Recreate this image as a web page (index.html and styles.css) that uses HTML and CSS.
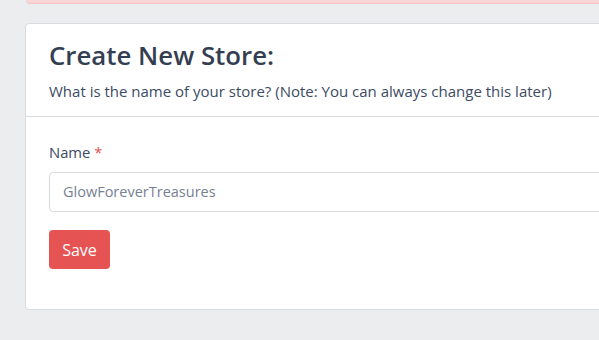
FILE: index.html
```html
<!DOCTYPE html>
<html>
<head>
<meta charset="utf-8">
<link rel="stylesheet" href="styles.css">
</head>
<body>
<div class="page">
  <div class="alert"></div>
  <div class="card">
    <div class="card-header">
      <h1 class="title">Create New Store:</h1>
      <p class="subtitle">What is the name of your store? (Note: You can always change this later)</p>
    </div>
    <div class="card-body">
      <label class="label">Name <span class="req">*</span></label>
      <div class="input">GlowForeverTreasures</div>
      <button class="btn">Save</button>
    </div>
  </div>
</div>
</body>
</html>
```
FILE: styles.css
```css
html, body {
  margin: 0;
  padding: 0;
  background: #ebedef;
  overflow: hidden;
  width: 599px;
  height: 340px;
}
body {
  font-family: "Open Sans", "Noto Sans", sans-serif;
  color: #3c4b64;
}
.page {
  width: 800px;
  padding-left: 25px;
}
.alert {
  margin-left: 1px;
  height: 4px;
  background: #f9d6d5;
  border-bottom: 1px solid #f4c3c4;
  border-radius: 0 0 0 4px;
  margin-top: -1px;
}
.card {
  margin-top: 19px;
  background: #fff;
  border: 1px solid #d8dbe0;
  border-radius: 4px;
}
.card-header {
  padding: 14px 23px 15px;
  border-bottom: 1px solid #d8dbe0;
}
.title {
  margin: 0;
  font-size: 25.8px;
  font-weight: 600;
  line-height: 34px;
  color: #343e52;
}
.subtitle {
  margin: 9px 0 0;
  font-size: 15px;
  line-height: 20px;
  color: #3c4b64;
}
.card-body {
  padding: 25px 23px 40px;
}
.label {
  display: block;
  font-size: 14.8px;
  line-height: 20px;
  color: #3c4b64;
}
.req {
  color: #e55353;
}
.input {
  margin-top: 10px;
  height: 38px;
  border: 1px solid #d8dbe0;
  border-radius: 4px;
  padding: 0 13px;
  font-size: 14.5px;
  line-height: 38px;
  color: #768192;
}
.btn {
  margin-top: 18px;
  display: block;
  width: 61px;
  height: 39px;
  border: 0;
  border-radius: 4px;
  background: #e55353;
  color: #fff;
  font-family: inherit;
  font-size: 16px;
  padding: 0;
}
```
